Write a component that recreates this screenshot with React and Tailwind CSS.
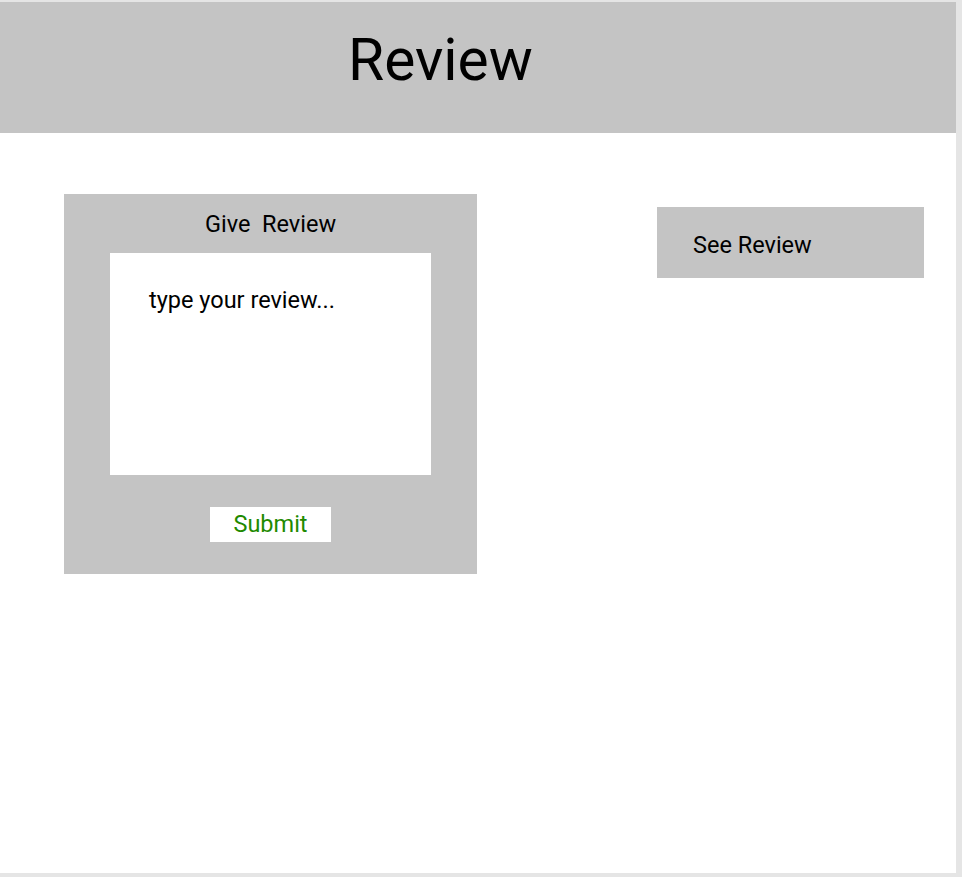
export default function App() {
  return (
    <div className="w-[962px] h-[877px] bg-[#e5e5e5] pt-[2px] overflow-hidden" style={{ fontFamily: "Roboto, 'Noto Sans', sans-serif" }}>
      <div className="w-[956px] h-[871px] bg-white flex flex-col">
        <div className="h-[131px] bg-[#c4c4c4] flex items-center">
          <h1 className="ml-[348px] text-[58.7px] leading-none text-black pb-[14px]">Review</h1>
        </div>
        <div className="flex items-start">
          <div className="ml-[64px] mt-[61px] w-[413px] h-[380px] bg-[#c4c4c4] flex flex-col items-center">
            <div className="mt-[16px] text-[23.5px] leading-[28px] text-black whitespace-pre">Give  Review</div>
            <div className="mt-[15px] w-[321px] h-[222px] bg-white pl-[39px] pt-[33px] text-[23.5px] leading-[28px] text-black">type your review...</div>
            <button className="mt-[32px] w-[121px] h-[35px] bg-white text-[23.5px] leading-none text-[#1f8a00]">Submit</button>
          </div>
          <div className="ml-[180px] mt-[74px] w-[267px] h-[71px] bg-[#c4c4c4] flex items-center pl-[36px] pt-[6px] text-[23.5px] leading-none text-black">See Review</div>
        </div>
      </div>
    </div>
  );
}
